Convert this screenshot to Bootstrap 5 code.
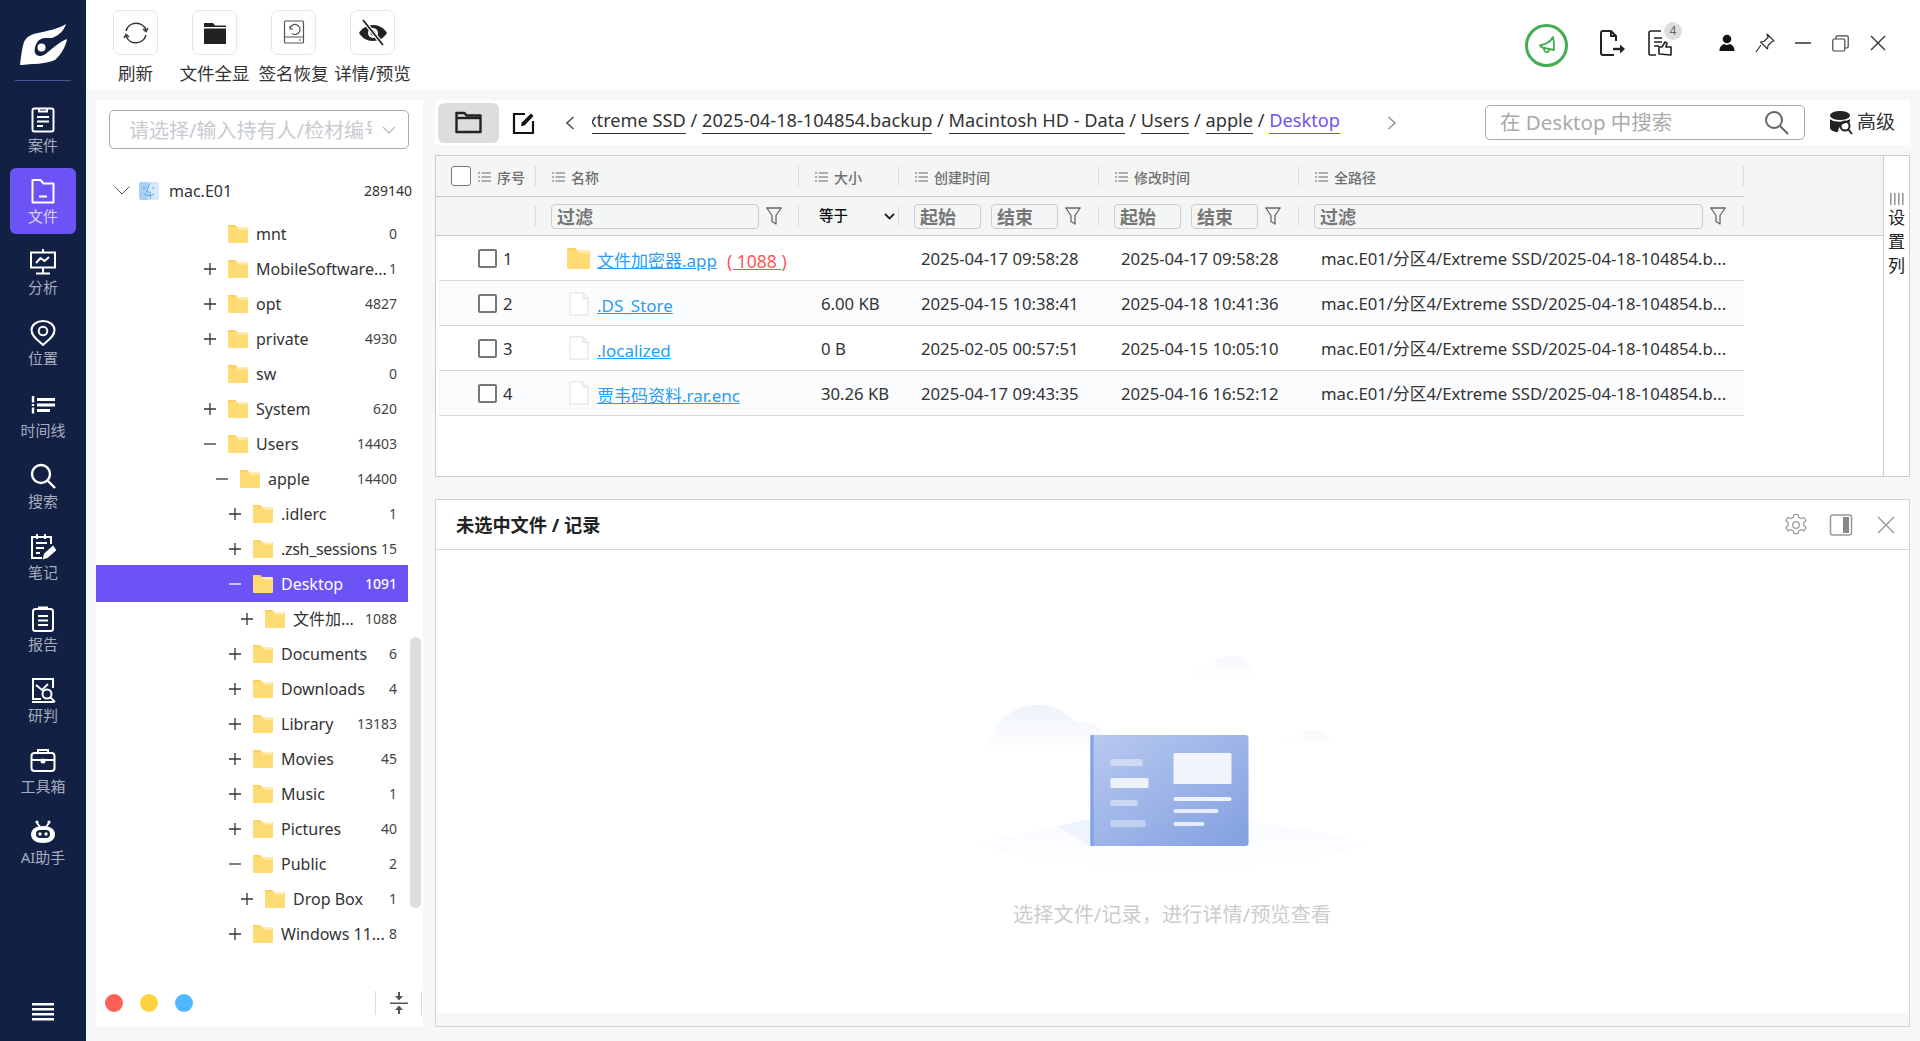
<!DOCTYPE html>
<html lang="zh-CN">
<head>
<meta charset="utf-8">
<title>文件</title>
<link href="https://cdn.jsdelivr.net/npm/bootstrap@5.3.0/dist/css/bootstrap.min.css" rel="stylesheet">
<style>
html,body{height:1041px;overflow:hidden}
body{font-family:"Noto Sans","Noto Sans CJK SC",sans-serif;background:#f7f7f7;color:#333;font-size:16px}
.rail{width:86px;height:1041px;background:#122044;color:#a7adbd}
.rail-logo{height:81px;width:56px;border-bottom:1px solid #45559a;padding-top:23px;margin:0 auto 15.5px}
.rail-logo svg{display:block;margin-left:5px}
.rail-item{width:66px;height:66px;margin:0 auto 5.3px;border-radius:6px;font-size:15px;line-height:18px;padding-top:10px}
.rail-item svg{width:26px;height:26px;display:block;margin:0 auto 3px;color:#fff}
.rail-item.on{background:#6b53f5;color:#d9d4fd}
.rail-foot{padding-bottom:19px}
.right-col{min-width:0}
.topbar{height:90px;background:#fff;padding-left:10px;padding-right:33px}
.tool{width:79px;text-align:center;font-size:17.5px;line-height:24px;color:#333;padding-top:10px}
.tool-box{width:45px;height:45px;border:1px solid #e6e6e6;border-radius:7px;margin:0 auto 6px}
.tool-box svg{width:30px;height:30px}
.win-row{height:90px}
.bell{width:43px;height:43px;border:3px solid #44ad52;border-radius:50%;margin-right:30px}
.win-icons{padding-bottom:4px}
.ic-file{width:28px;height:28px;margin-right:22px}
.note-wrap{margin-right:46px}
.ic-note{width:24px;height:26px;display:block}
.note-badge{top:-8px;right:-10px;width:18px;height:18px;border-radius:50%;background:#ddd;color:#666;font-size:12px;line-height:18px;text-align:center}
.ic-user{width:18px;height:18px;margin-right:19px}
.ic-pin{width:20px;height:20px;margin-right:20px}
.ic-min{width:16px;height:16px;margin-right:20.5px}
.ic-rest{width:17px;height:17px;margin-right:20.5px}
.ic-close{width:18px;height:18px}
.stage{height:951px;padding:10px 10px 14px 10px;gap:12px}
.tree-pane{width:327px;background:#fff}
.picker{margin:10px 14px 0 13px;height:39px;border:1px solid #aaa;border-radius:5px;padding:0 12px 0 19px;color:#c8cbd1;font-size:20px}
.picker span{overflow:hidden;white-space:nowrap;width:243px;padding-top:3px}
.rootrow{height:35px;margin-top:24px;padding-left:18px;padding-right:11px;margin-bottom:8px}
.finder{margin-left:9px}
.rootrow .nm{font-size:16px;color:#333;margin-left:10px}
.rootrow .ct{font-size:14px;color:#333}
.tree-rows{width:312px}
.trow{height:35px;font-size:16px;color:#333;padding-right:11px;white-space:nowrap}
.trow.sel{background:#6b53f5;color:#fff;height:37px;margin:-1px 0}
.tg{width:14px;flex:none;text-align:center;font-size:0}
.tg svg{width:12px;height:12px}
.sel .tg svg{color:#fff}
.fold{width:20px;height:18px;margin:0 8px 0 11px;flex:none}
.nm{flex:1;min-width:0;line-height:20px}
.nm.tight{letter-spacing:-.3px}
.ct{font-size:14px;color:#444;flex:none;text-align:right}
.sel .ct{color:#fff;font-weight:500}
.l1{padding-left:107px}
.l2{padding-left:119px}
.l3{padding-left:132px}
.l4{padding-left:144px}
.scroller{width:11px;height:271px;background:#ddd;border-radius:6px;right:2px;top:537px}
.tree-foot{height:48px;padding:0 1px 0 9px;margin-top:auto}
.dot-mark{width:18px;height:18px;border-radius:50%;margin-right:17px}
.dot-r{background:#ff6158}.dot-y{background:#ffd23f}.dot-b{background:#51b8ff}
.collapse-cell{width:47px;height:24px;border-left:1px solid #ddd;border-right:1px solid #ddd}
.right-pane{width:1475px}
.crumbs{height:45px;background:#fff;margin-bottom:10px;padding-left:3px;padding-right:15px}
.fold-btn{width:61px;height:40px;border-radius:6px;background:#ddd}
.ic-edit{margin-left:13px}
.ic-back{margin-left:28px;margin-right:16px}
.ic-next{margin-left:46px}
.crumb-track{width:748px;overflow:hidden;white-space:nowrap;font-size:18.2px;color:#333;direction:rtl;padding-bottom:3px}
.crumb-track>div{direction:ltr;display:inline-block}
.crumb-track u{text-decoration:none;border-bottom:1px solid #333;padding-bottom:1px}
.crumb-track u.cur{color:#6b53f5;border-color:#6b53f5}
.searchbox{width:320px;height:35px;border:1px solid #aaa;border-radius:5px;padding:0 15px 0 14px;color:#aaa;font-size:20.5px}
.adv{font-size:19px;color:#333;margin-left:25px}
.grid-box{height:322px;border:1px solid #ccc;background:#fff;margin-bottom:22px}
.grid-main{width:1447px;flex:none}
.grid-side{width:26px;flex:none;border-left:1px solid #ccc;font-size:17px;line-height:24px;color:#222;padding-top:37px}
.grid-side svg{width:14px;height:12px;display:block;margin:0 auto 1px;color:#999}
.gh,.gf{background:#f4f6f6;border-bottom:1px solid #ccc}
.gh{height:41px;font-size:14px;color:#6f6f6f;width:1308px}
.gh-fill{background:#f4f6f6;height:41px;flex:1}
.gh-wrap{background:#f4f6f6}
.gf{height:39px}
.cell-a{width:100px}.cell-b{width:263px}.cell-c{width:100px}.cell-d{width:200px}.cell-e{width:200px}.cell-f{width:445px}
.hc{height:20px;flex:none;border-right:1px solid #ddd;padding-left:16px;padding-top:2px;color:#6f6f6f;font-weight:500}
.hc svg{width:13px;height:10px;margin-right:6px;color:#666}
.hbox{width:20px;height:20px;border:1px solid #777;border-radius:3px;background:#fff;margin:-2px 7px 0 -1px}
.fc{height:20px;flex:none;border-right:1px solid #ddd}
.filt{height:25px;border:1px solid #ccc;border-radius:4px;font-weight:700;font-size:18px;color:#777;padding-left:5px;line-height:24px;background:#f4f6f6;margin-top:1px}
.f-name{width:208px;margin-left:15px;margin-right:7px}
.f-from{width:67px;margin-left:15px;margin-right:10px}
.f-to{width:67px;margin-right:7px}
.f-path{width:389px;margin-left:15px;margin-right:7px}
.fun{width:16px;height:18px;color:#666;flex:none}
.opt-eq{font-size:14.5px;font-weight:500;color:#111;padding-left:20px;padding-right:3px}
.rows{margin-left:3px;width:1305px}
.rows table{width:1305px;table-layout:fixed;margin:0;--bs-table-bg:transparent;color:#333}
.rows td{height:44.8px;padding:1px 0 0;border-bottom:1px solid #d9d9d9;vertical-align:middle;font-size:16.7px;white-space:nowrap;overflow:hidden;border-top:0}
.rows tr:nth-child(even){background:#fbfcfe}
.c1{width:97px}.c2{width:263px}.c3{width:100px}.c4{width:200px}.c5{width:200px}.c6{width:445px}
.rows td:nth-child(2){padding-left:31px}
.rows td:nth-child(4),.rows td:nth-child(5),.rows td:nth-child(3){padding-left:22px}
.rows td:nth-child(6){padding-left:22px}
.rbox{width:19px;height:19px;border:2px solid #777;border-radius:2px;margin:0 6px 0 39px;background:#fff;flex:none}
.lnk{color:#2c9cf4;text-decoration:underline;font-size:17px;padding-top:4px}
.red{color:#f55;text-decoration:underline;margin-left:10px;font-size:17.5px;padding-top:4px}
.ficon{width:23px;height:21px;margin-right:7px;flex:none}
.page-ic{width:20px;height:24px;margin-right:8px;margin-left:2px;flex:none}
.detail{height:528px;border:1px solid #d5d5d5;background:#f7f7f7}
.det-head{height:50px;background:#fff;border-bottom:1px solid #d5d5d5;padding:0 11px 0 20px}
.det-title{font-size:18.2px;font-weight:700;color:#222;padding-top:3px}
.det-head svg{width:24px;height:24px;color:#999}
.det-ic{margin-left:21px}
.det-body{height:463px;background:#fff;padding-top:89px}
.empty-art{width:400px;height:235px;display:block;margin:0 auto}
.empty-txt{color:#ccc;font-size:20.2px;margin-top:26px;line-height:28px;margin-left:-1px}
</style>
</head>
<body class="d-flex m-0">
<svg width="0" height="0" class="d-none">
 <symbol id="folder" viewBox="0 0 20 18"><path d="M1 0h6l2 2h10a1 1 0 0 1 1 1v14a1 1 0 0 1-1 1H1a1 1 0 0 1-1-1V1a1 1 0 0 1 1-1z" fill="#ffdc73"/><path d="M9 2h10v2.500H11z" fill="#ffedb5"/><path d="M1 0h6l2 2H0V1a1 1 0 0 1 1-1z" fill="#fdcf62"/></symbol>
 <symbol id="plus" viewBox="0 0 12 12"><path d="M0 6h12M6 0v12" stroke="currentColor" stroke-width="1.300" fill="none"/></symbol>
 <symbol id="minus" viewBox="0 0 12 12"><path d="M0 6h12" stroke="currentColor" stroke-width="1.300" fill="none"/></symbol>
 <symbol id="funnel" viewBox="0 0 16 18"><path d="M.8 1h14.400L10 8.500V17l-4-2.500V8.500z" fill="none" stroke="currentColor" stroke-width="1.300" stroke-linejoin="round"/></symbol>
 <symbol id="lines" viewBox="0 0 13 10"><path d="M0 1h2M3.500 1H13M0 5h2M3.500 5H13M0 9h2M3.500 9H13" stroke="currentColor" stroke-width="1.100" fill="none"/></symbol>
 <symbol id="pageic" viewBox="0 0 20 24"><path d="M1.500.8h12l5.500 5.500v16.200a.7.700 0 0 1-.7.700H1.700a.7.700 0 0 1-.7-.7V1.300z" fill="#fff" stroke="#dfe3ea" stroke-width="1.200"/><path d="M13.500 1v5.500H19" fill="#f4f6f9" stroke="#dfe3ea" stroke-width="1"/></symbol>
 <symbol id="x" viewBox="0 0 24 24"><path d="M4 4l16 16M20 4L4 20" stroke="currentColor" stroke-width="1.400" fill="none"/></symbol>
</svg>

<aside class="rail d-flex flex-column flex-shrink-0 text-center">
 <div class="rail-logo">
  <svg width="48" height="43" viewBox="0 0 48 43"><path d="M0 42C1 33 2 25 4 19 7 13 12 11 18 10 27 8 38 6 46 1 44 7 40 12 32 15 27 15 22 14 18 18 15 22 14 27 15 30 17 34 23 34 28 29 33 25 39 19 47 16 46 22 42 31 35 37 27 41 12 41 0 42z" fill="#fff"/><circle cx="21.500" cy="24.500" r="4" fill="#fff"/></svg>
 </div>
 <div class="rail-item"><svg viewBox="0 0 26 26" fill="none" stroke="currentColor" stroke-width="2"><rect x="2.500" y="1.500" width="21" height="23" rx="2"/><path d="M9 1v3.500h8V1M7 10h12M7 14.500h12M7 19h6"/></svg>案件</div>
 <div class="rail-item on"><svg viewBox="0 0 26 26" fill="none" stroke="currentColor" stroke-width="2"><path d="M2.500 24.500V2h8l3 3.500h10v19z" stroke-linejoin="round"/><path d="M9 18.500h8"/></svg>文件</div>
 <div class="rail-item"><svg viewBox="0 0 26 26" fill="none" stroke="currentColor" stroke-width="2"><path d="M13 0v3M1 3.500h24v15H1zM13 18.500V24M6 24.500h14M6 14l4.500-5 4 3 4.500-4"/></svg>分析</div>
 <div class="rail-item"><svg viewBox="0 0 26 26" fill="none" stroke="currentColor" stroke-width="2"><path d="M13 25C8 20 1.500 16.500 1.500 10a11.500 9 0 0 1 23 0C24.500 16.500 18 20 13 25z"/><circle cx="13" cy="11" r="4.300"/></svg>位置</div>
 <div class="rail-item"><svg viewBox="0 0 26 26" fill="none" stroke="currentColor" stroke-width="3"><path d="M7 7.500h18M7 13h18M7 18.500h13"/><path d="M3 4v6.500M3 12v2M3 15.500v6" stroke-width="2.400"/></svg>时间线</div>
 <div class="rail-item"><svg viewBox="0 0 26 26" fill="none" stroke="currentColor" stroke-width="2.400"><circle cx="11" cy="11" r="9"/><path d="M17.500 17.500L25 25"/></svg>搜索</div>
 <div class="rail-item"><svg viewBox="0 0 26 26" fill="none" stroke="currentColor" stroke-width="2"><path d="M21 10V3H2v21h10M7 0v5M15 0v5M6 9h11M6 14h8M6 19h4"/><path d="M14 24l1-4 8-7 2 3-8 7z" fill="currentColor"/></svg>笔记</div>
 <div class="rail-item"><svg viewBox="0 0 26 26" fill="none" stroke="currentColor" stroke-width="2"><rect x="3" y="3" width="20" height="22" rx="2.500"/><path d="M9 4V1.500h8V4M8 10h10M8 14.500h10M8 19h10"/></svg>报告</div>
 <div class="rail-item"><svg viewBox="0 0 26 26" fill="none" stroke="currentColor" stroke-width="2"><path d="M23 11V2H3v20h8M2 25h22M6 8l6 5 6-6"/><circle cx="17" cy="17" r="4.500"/><path d="M20 20l5 5"/></svg>研判</div>
 <div class="rail-item"><svg viewBox="0 0 26 26" fill="none" stroke="currentColor" stroke-width="2"><rect x="1.500" y="5" width="23" height="18" rx="3"/><path d="M8 5V2h10v3M2 12h22"/><circle cx="13" cy="13" r="1.500" fill="currentColor"/></svg>工具箱</div>
 <div class="rail-item"><svg viewBox="0 0 26 26"><path d="M7 4l3 4M19 4l-3 4" stroke="currentColor" stroke-width="2"/><circle cx="7" cy="3" r="1.600" fill="currentColor"/><circle cx="19" cy="3" r="1.600" fill="currentColor"/><path d="M13 7c8 0 12 4 12 8.500 0 5-5 8.500-12 8.500S1 20.500 1 15.500C1 11 5 7 13 7z" fill="currentColor"/><rect x="6" y="11" width="14" height="8" rx="4" fill="#122044"/><circle cx="10" cy="15" r="1.700" fill="#fff"/><circle cx="16" cy="15" r="1.700" fill="#fff"/></svg>AI助手</div>
 <div class="rail-foot mt-auto"><svg width="22" height="18" viewBox="0 0 22 18" fill="#fff"><rect width="22" height="2.500"/><rect y="5" width="22" height="2.500"/><rect y="10" width="22" height="2.500"/><rect y="15" width="22" height="2.500"/></svg></div>
</aside>

<div class="right-col flex-grow-1 d-flex flex-column">
 <header class="topbar d-flex align-items-start">
  <div class="tool"><div class="tool-box d-flex align-items-center justify-content-center"><svg viewBox="0 0 30 30" fill="none" stroke="#333" stroke-width="1.500"><path d="M5 13A10.500 10.500 0 0 1 25 12"/><path d="M25 17A10.500 10.500 0 0 1 5 18"/><path d="M22 11l3 2.500 2-3.500M8 19l-3-2.500-2 3.500"/></svg></div>刷新</div>
  <div class="tool"><div class="tool-box d-flex align-items-center justify-content-center"><svg viewBox="0 0 30 30" fill="#222"><path d="M4 5h9l2 2.500h11V9H4zM4 10.500h22V26H4z"/></svg></div>文件全显</div>
  <div class="tool"><div class="tool-box d-flex align-items-center justify-content-center"><svg viewBox="0 0 30 30" fill="none" stroke="#555" stroke-width="1.200"><rect x="5.500" y="3" width="19" height="22" rx="1"/><path d="M5.500 19h19M20 22h2"/><path d="M11 11a5 5 0 1 1 2 4.500M11 8v3h3"/></svg></div>签名恢复</div>
  <div class="tool"><div class="tool-box d-flex align-items-center justify-content-center"><svg viewBox="0 0 30 30"><path d="M1 15c3-5 8-8 14-8s11 3 14 8c-3 5-8 8-14 8S4 20 1 15z" fill="#222"/><circle cx="15" cy="15" r="5" fill="#fff"/><circle cx="15" cy="15" r="2.500" fill="#222"/><path d="M5 2l20 25" stroke="#fff" stroke-width="4"/><path d="M5 2l20 25" stroke="#222" stroke-width="1.800"/></svg></div>详情/预览</div>
  <div class="win-row ms-auto d-flex align-items-center">
   <div class="bell d-flex align-items-center justify-content-center"><svg width="22" height="22" viewBox="0 0 22 22" fill="none" stroke="#44ad52" stroke-width="1.800" stroke-linejoin="round" stroke-linecap="round"><path d="M17 3c-2 4-6 7-13 8.500l2 2 12 2.500c.3-5 0-9-1-13z"/><path d="M8 15c0 3 3 4 5 2"/></svg></div>
   <div class="win-icons d-flex align-items-center">
    <svg class="ic-file" viewBox="0 0 28 28" fill="none" stroke="#222" stroke-width="2"><path d="M18 12V7l-5-5H5a2 2 0 0 0-2 2v20a2 2 0 0 0 2 2h11M13 2v5h5" stroke-linejoin="round"/><path d="M15 20h9" stroke-width="2.400"/><path d="M22 15.500l5 4.500-5 4.500z" fill="#222" stroke="none"/></svg>
    <div class="note-wrap position-relative"><svg class="ic-note" viewBox="0 0 24 26" fill="none" stroke="#222" stroke-width="1.600"><path d="M13 1H3a2 2 0 0 0-2 2v21a1 1 0 0 0 1 1h6M6 8h8M6 12h8M6 16h5"/><path d="M11 24v-7h3l3-5 2 1-1 4h5v8z" stroke-linejoin="round"/></svg><span class="note-badge position-absolute">4</span></div>
    <svg class="ic-user" viewBox="0 0 18 18" fill="#111"><circle cx="9" cy="5" r="4.300"/><path d="M1.500 17c0-4 2-6.500 5-7 2 1.200 3 1.200 5 0 3 .5 5 3 5 7z"/></svg>
    <svg class="ic-pin" viewBox="0 0 20 20" fill="none" stroke="#333" stroke-width="1.200"><path d="M12 1l7 7-2 .5-4 4-.5 3.500-7-7 3.500-.5 4-4zM6 12l-5 7" stroke-linejoin="round"/></svg>
    <svg class="ic-min" viewBox="0 0 16 16"><path d="M0 8h16" stroke="#333" stroke-width="1.500"/></svg>
    <svg class="ic-rest" viewBox="0 0 17 17" fill="none" stroke="#444" stroke-width="1.200"><rect x=".8" y="4" width="12" height="12" rx="1.500"/><path d="M4 4V2.300A1.500 1.500 0 0 1 5.500.8h9.700a1 1 0 0 1 1 1v9.700a1.500 1.500 0 0 1-1.500 1.500H13"/></svg>
    <svg class="ic-close" viewBox="0 0 18 18"><path d="M2 2l14 14M16 2L2 16" stroke="#333" stroke-width="1.400"/></svg>
   </div>
  </div>
 </header>

 <div class="stage d-flex">
  <section class="tree-pane d-flex flex-column position-relative">
   <div class="picker d-flex align-items-center justify-content-between"><span>请选择/输入持有人/检材编号</span><svg width="14" height="8" viewBox="0 0 14 8" fill="none" stroke="#bbb" stroke-width="1.300"><path d="M1 1l6 6 6-6"/></svg></div>
   <div class="rootrow d-flex align-items-center"><svg width="16" height="9" viewBox="0 0 16 9" fill="none" stroke="#556" stroke-width="1"><path d="M.5.500L8 8 15.500.500"/></svg><svg class="finder" width="20" height="18" viewBox="0 0 20 18"><rect width="20" height="18" rx="2" fill="#a6d0f5"/><rect x="9" width="11" height="18" rx="1" fill="#d6e8f8"/><path d="M11 1C9 5 8 8 8 10h3c0 2 0 5 .5 7M5 5v2M14 5v2M5 12c3 2 7 2 10 0" fill="none" stroke="#5b9fdc" stroke-width="1"/></svg><span class="nm">mac.E01</span><span class="ct">289140</span></div>
   <div class="tree-rows">
    <div class="trow l1 d-flex align-items-center"><span class="tg"></span><svg class="fold"><use href="#folder"/></svg><span class="nm">mnt</span><span class="ct">0</span></div>
    <div class="trow l1 d-flex align-items-center"><span class="tg"><svg><use href="#plus"/></svg></span><svg class="fold"><use href="#folder"/></svg><span class="nm">MobileSoftware...</span><span class="ct">1</span></div>
    <div class="trow l1 d-flex align-items-center"><span class="tg"><svg><use href="#plus"/></svg></span><svg class="fold"><use href="#folder"/></svg><span class="nm">opt</span><span class="ct">4827</span></div>
    <div class="trow l1 d-flex align-items-center"><span class="tg"><svg><use href="#plus"/></svg></span><svg class="fold"><use href="#folder"/></svg><span class="nm">private</span><span class="ct">4930</span></div>
    <div class="trow l1 d-flex align-items-center"><span class="tg"></span><svg class="fold"><use href="#folder"/></svg><span class="nm">sw</span><span class="ct">0</span></div>
    <div class="trow l1 d-flex align-items-center"><span class="tg"><svg><use href="#plus"/></svg></span><svg class="fold"><use href="#folder"/></svg><span class="nm">System</span><span class="ct">620</span></div>
    <div class="trow l1 d-flex align-items-center"><span class="tg"><svg><use href="#minus"/></svg></span><svg class="fold"><use href="#folder"/></svg><span class="nm">Users</span><span class="ct">14403</span></div>
    <div class="trow l2 d-flex align-items-center"><span class="tg"><svg><use href="#minus"/></svg></span><svg class="fold"><use href="#folder"/></svg><span class="nm">apple</span><span class="ct">14400</span></div>
    <div class="trow l3 d-flex align-items-center"><span class="tg"><svg><use href="#plus"/></svg></span><svg class="fold"><use href="#folder"/></svg><span class="nm">.idlerc</span><span class="ct">1</span></div>
    <div class="trow l3 d-flex align-items-center"><span class="tg"><svg><use href="#plus"/></svg></span><svg class="fold"><use href="#folder"/></svg><span class="nm tight">.zsh_sessions</span><span class="ct">15</span></div>
    <div class="trow sel l3 d-flex align-items-center"><span class="tg"><svg><use href="#minus"/></svg></span><svg class="fold"><use href="#folder"/></svg><span class="nm">Desktop</span><span class="ct">1091</span></div>
    <div class="trow l4 d-flex align-items-center"><span class="tg"><svg><use href="#plus"/></svg></span><svg class="fold"><use href="#folder"/></svg><span class="nm">文件加...</span><span class="ct">1088</span></div>
    <div class="trow l3 d-flex align-items-center"><span class="tg"><svg><use href="#plus"/></svg></span><svg class="fold"><use href="#folder"/></svg><span class="nm">Documents</span><span class="ct">6</span></div>
    <div class="trow l3 d-flex align-items-center"><span class="tg"><svg><use href="#plus"/></svg></span><svg class="fold"><use href="#folder"/></svg><span class="nm">Downloads</span><span class="ct">4</span></div>
    <div class="trow l3 d-flex align-items-center"><span class="tg"><svg><use href="#plus"/></svg></span><svg class="fold"><use href="#folder"/></svg><span class="nm">Library</span><span class="ct">13183</span></div>
    <div class="trow l3 d-flex align-items-center"><span class="tg"><svg><use href="#plus"/></svg></span><svg class="fold"><use href="#folder"/></svg><span class="nm">Movies</span><span class="ct">45</span></div>
    <div class="trow l3 d-flex align-items-center"><span class="tg"><svg><use href="#plus"/></svg></span><svg class="fold"><use href="#folder"/></svg><span class="nm">Music</span><span class="ct">1</span></div>
    <div class="trow l3 d-flex align-items-center"><span class="tg"><svg><use href="#plus"/></svg></span><svg class="fold"><use href="#folder"/></svg><span class="nm">Pictures</span><span class="ct">40</span></div>
    <div class="trow l3 d-flex align-items-center"><span class="tg"><svg><use href="#minus"/></svg></span><svg class="fold"><use href="#folder"/></svg><span class="nm">Public</span><span class="ct">2</span></div>
    <div class="trow l4 d-flex align-items-center"><span class="tg"><svg><use href="#plus"/></svg></span><svg class="fold"><use href="#folder"/></svg><span class="nm">Drop Box</span><span class="ct">1</span></div>
    <div class="trow l3 d-flex align-items-center"><span class="tg"><svg><use href="#plus"/></svg></span><svg class="fold"><use href="#folder"/></svg><span class="nm">Windows 11...</span><span class="ct">8</span></div>
   </div>
   <div class="scroller position-absolute"></div>
   <div class="tree-foot d-flex align-items-center">
    <span class="dot-mark dot-r"></span><span class="dot-mark dot-y"></span><span class="dot-mark dot-b"></span>
    <div class="collapse-cell ms-auto d-flex align-items-center justify-content-center"><svg width="18" height="24" viewBox="0 0 18 24" fill="#555"><path d="M0 11.500h18v1.500H0zM8 1h2v4h3l-4 4.500L5 5h3zM8 23v-4H5l4-4.500 4 4.500h-3v4z"/></svg></div>
   </div>
  </section>

  <section class="right-pane">
   <div class="crumbs d-flex align-items-center">
    <div class="fold-btn d-flex align-items-center justify-content-center"><svg width="27" height="23" viewBox="0 0 27 23" fill="none" stroke="#222" stroke-width="2.400"><path d="M1.500 21V2h8l2 2.500h14V21z" stroke-linejoin="round"/><path d="M1.500 7h24"/></svg></div>
    <svg class="ic-edit" width="24" height="24" viewBox="0 0 24 24" fill="none" stroke="#111" stroke-width="2.200"><path d="M13 3H2v19h19V10"/><path d="M9 15l.8-3.500L19 2.500l2.500 2.500-9 9.500z" fill="#111" stroke="none"/></svg>
    <svg class="ic-back" width="12" height="16" viewBox="0 0 12 16" fill="none" stroke="#555" stroke-width="1.700"><path d="M9.500 2L3 8l6.500 6"/></svg>
    <div class="crumb-track"><div><u>Extreme SSD</u> / <u>2025-04-18-104854.backup</u> / <u>Macintosh HD - Data</u> / <u>Users</u> / <u>apple</u> / <u class="cur">Desktop</u></div></div>
    <svg class="ic-next" width="12" height="16" viewBox="0 0 12 16" fill="none" stroke="#999" stroke-width="1.700"><path d="M2.500 2L9 8l-6.500 6"/></svg>
    <div class="searchbox ms-auto d-flex align-items-center justify-content-between"><span>在 Desktop 中搜索</span><svg width="25" height="25" viewBox="0 0 25 25" fill="none" stroke="#666" stroke-width="2"><circle cx="10" cy="10" r="8"/><path d="M16 16l8 8"/></svg></div>
    <div class="adv d-flex align-items-center gap-1"><svg width="23" height="24" viewBox="0 0 23 24" fill="#222"><ellipse cx="10" cy="4.500" rx="10" ry="4.500"/><path d="M0 8c2 3 15 4 20 0v3c-8 1-12 5-12 10C4 21 0 19 0 17z"/><circle cx="15" cy="15" r="4.500" fill="none" stroke="#222" stroke-width="2"/><path d="M18 18l4 5" stroke="#222" stroke-width="2"/></svg><span>高级</span></div>
   </div>

   <div class="grid-box d-flex">
    <div class="grid-main">
     <div class="d-flex gh-wrap"><div class="gh d-flex align-items-center">
       <div class="hc cell-a d-flex align-items-center"><span class="hbox"></span><svg><use href="#lines"/></svg>序号</div>
       <div class="hc cell-b d-flex align-items-center"><svg><use href="#lines"/></svg>名称</div>
       <div class="hc cell-c d-flex align-items-center"><svg><use href="#lines"/></svg>大小</div>
       <div class="hc cell-d d-flex align-items-center"><svg><use href="#lines"/></svg>创建时间</div>
       <div class="hc cell-e d-flex align-items-center"><svg><use href="#lines"/></svg>修改时间</div>
       <div class="hc cell-f d-flex align-items-center"><svg><use href="#lines"/></svg>全路径</div>
      </div><div class="gh-fill"></div></div>
     <div class="gf d-flex align-items-center">
      <div class="fc cell-a"></div>
      <div class="fc cell-b d-flex align-items-center"><div class="filt f-name">过滤</div><svg class="fun"><use href="#funnel"/></svg></div>
      <div class="fc cell-c d-flex align-items-center justify-content-between opt-eq"><span>等于</span><svg width="11" height="7" viewBox="0 0 11 7" fill="none" stroke="#222" stroke-width="1.800"><path d="M1 1l4.500 4.500L10 1"/></svg></div>
      <div class="fc cell-d d-flex align-items-center"><div class="filt f-from">起始</div><div class="filt f-to">结束</div><svg class="fun"><use href="#funnel"/></svg></div>
      <div class="fc cell-e d-flex align-items-center"><div class="filt f-from">起始</div><div class="filt f-to">结束</div><svg class="fun"><use href="#funnel"/></svg></div>
      <div class="fc cell-f d-flex align-items-center"><div class="filt f-path">过滤</div><svg class="fun"><use href="#funnel"/></svg></div>
     </div>
     <div class="rows">
      <table class="table">
       <colgroup><col class="c1"><col class="c2"><col class="c3"><col class="c4"><col class="c5"><col class="c6"></colgroup>
       <tbody>
        <tr><td><div class="d-flex align-items-center"><span class="rbox"></span>1</div></td><td><div class="d-flex align-items-center"><svg class="ficon" viewBox="0 0 20 18" preserveAspectRatio="none"><use href="#folder"/></svg><span class="lnk">文件加密器.app</span><span class="red">( 1088 )</span></div></td><td></td><td>2025-04-17 09:58:28</td><td>2025-04-17 09:58:28</td><td>mac.E01/分区4/Extreme SSD/2025-04-18-104854.b...</td></tr>
        <tr><td><div class="d-flex align-items-center"><span class="rbox"></span>2</div></td><td><div class="d-flex align-items-center"><svg class="page-ic"><use href="#pageic"/></svg><span class="lnk">.DS_Store</span></div></td><td>6.00 KB</td><td>2025-04-15 10:38:41</td><td>2025-04-18 10:41:36</td><td>mac.E01/分区4/Extreme SSD/2025-04-18-104854.b...</td></tr>
        <tr><td><div class="d-flex align-items-center"><span class="rbox"></span>3</div></td><td><div class="d-flex align-items-center"><svg class="page-ic"><use href="#pageic"/></svg><span class="lnk">.localized</span></div></td><td>0 B</td><td>2025-02-05 00:57:51</td><td>2025-04-15 10:05:10</td><td>mac.E01/分区4/Extreme SSD/2025-04-18-104854.b...</td></tr>
        <tr><td><div class="d-flex align-items-center"><span class="rbox"></span>4</div></td><td><div class="d-flex align-items-center"><svg class="page-ic"><use href="#pageic"/></svg><span class="lnk">贾韦码资料.rar.enc</span></div></td><td>30.26 KB</td><td>2025-04-17 09:43:35</td><td>2025-04-16 16:52:12</td><td>mac.E01/分区4/Extreme SSD/2025-04-18-104854.b...</td></tr>
       </tbody>
      </table>
     </div>
    </div>
    <div class="grid-side text-center"><svg viewBox="0 0 14 12" fill="#999"><rect x="0" width="1.600" height="12"/><rect x="4" width="1.600" height="12"/><rect x="8" width="1.600" height="12"/><rect x="12" width="1.600" height="12"/></svg>设<br>置<br>列</div>
   </div>

   <div class="detail">
    <div class="det-head d-flex align-items-center">
     <span class="det-title">未选中文件 / 记录</span>
     <svg class="ms-auto" viewBox="0 0 24 24" fill="none" stroke="currentColor" stroke-width="1.200"><circle cx="12" cy="12" r="3.300"/><path d="M10 1.500h4l.7 3 2.500 1.200 2.800-1.400 2 3.400-2.300 2.100v2.600l2.300 2.100-2 3.400-2.800-1.400-2.500 1.200-.7 3h-4l-.7-3-2.500-1.200-2.800 1.400-2-3.400 2.300-2.100v-2.600L1.800 7.700l2-3.400 2.800 1.400 2.500-1.200z" stroke-linejoin="round"/></svg>
     <svg class="det-ic" viewBox="0 0 24 24" fill="none"><rect x="1.500" y="2" width="21" height="20" rx="2" stroke="currentColor" stroke-width="1.500"/><rect x="14" y="4" width="6" height="16" fill="#888"/></svg>
     <svg class="det-ic"><use href="#x"/></svg>
    </div>
    <div class="det-body text-center">
     <svg class="empty-art" viewBox="-2.500 0 400 235">
      <defs>
       <linearGradient id="g1" x1="0" y1="0" x2="1" y2="1"><stop offset="0" stop-color="#b8c9f0"/><stop offset="1" stop-color="#82a0e0"/></linearGradient>
       <linearGradient id="g2" x1="0" y1="0" x2="0" y2="1"><stop offset="0" stop-color="#eef3fb"/><stop offset="1" stop-color="#fff"/></linearGradient>
       <linearGradient id="g3" x1="0" y1="0" x2="0" y2="1"><stop offset="0" stop-color="#f6f8fd"/><stop offset="1" stop-color="#fff"/></linearGradient>
       <linearGradient id="g4" x1="0" y1="0" x2="0" y2="1"><stop offset="0" stop-color="#f8faff"/><stop offset="1" stop-color="#fff"/></linearGradient>
      </defs>
      <path d="M3 205c70-20 150-27 195-27s120 7 195 27c-60 20-130 28-195 28S60 225 3 205z" fill="url(#g4)"/>
      <path d="M13 113c0-30 25-47 50-47 17 0 30 8 37 18 20-3 30 5 38 29z" fill="url(#g2)"/>
      <path d="M209 36c5-7 15-7 24-7 4-8 14-12 24-12 12 0 20 9 26 19z" fill="url(#g3)"/>
      <path d="M303 107c3-5 10-6 18-6 3-6 9-10 18-10 9 0 15 5 19 16z" fill="url(#g3)"/>
      <path d="M82 187l33 20v-27z" fill="#eef4fd"/>
      <rect x="115" y="96" width="158" height="111" rx="3" fill="url(#g1)"/>
      <rect x="115" y="96" width="3" height="111" fill="#80a0ea"/>
      <rect x="135" y="120" width="32" height="7" rx="1.500" fill="#cdd9f5"/>
      <rect x="135" y="139" width="38" height="10" rx="1.500" fill="#eef2fc"/>
      <rect x="135" y="161" width="27" height="6" rx="1.500" fill="#cbd7f3"/>
      <rect x="135" y="181" width="35" height="7" rx="1.500" fill="#c3d1f1"/>
      <rect x="198" y="114" width="58" height="31" rx="1.500" fill="#f1f4fd"/>
      <rect x="198" y="158" width="58" height="4" rx="2" fill="#f1f4fd"/>
      <rect x="198" y="170" width="45" height="4" rx="2" fill="#e6ecfa"/>
      <rect x="198" y="183" width="31" height="4" rx="2" fill="#e6ecfa"/>
     </svg>
     <div class="empty-txt">选择文件/记录，进行详情/预览查看</div>
    </div>
   </div>
  </section>
 </div>
</div>
</body>
</html>
